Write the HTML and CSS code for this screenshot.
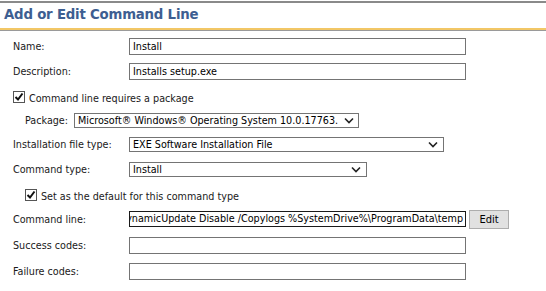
FILE: index.html
```html
<!DOCTYPE html>
<html lang="en">
<head>
    <meta charset="UTF-8">
    <meta name="viewport" content="width=device-width, initial-scale=1.0">
    <title>Add or Edit Command Line</title>
    <link rel="stylesheet" href="styles.css">
</head>
<body>
    <div id="header">
        <h2>Add or Edit Command Line</h2>
    </div>

    <div id="form">
        <div class="row">
            <span class="label">Name:</span>
            <div class="field wide">Install</div>
        </div>
        <div class="row">
            <span class="label">Description:</span>
            <div class="field wide">Installs setup.exe</div>
        </div>
        <div class="row check">
            <span class="box">
                <svg width="10" height="10" viewBox="0 0 10 10"><path d="M1.5 5 L4 7.5 L8.5 1.5" fill="none" stroke="#111" stroke-width="2"/></svg>
            </span>
            <span>Command line requires a package</span>
        </div>
        <div class="row package">
            <span class="sublabel">Package:</span>
            <div class="select pkg">
                <span class="text">Microsoft® Windows® Operating System 10.0.17763.</span>
                <svg width="10" height="7" viewBox="0 0 10 7"><path d="M1 1.5 L5 5.5 L9 1.5" fill="none" stroke="#222" stroke-width="1.6"/></svg>
            </div>
        </div>
        <div class="row">
            <span class="label">Installation file type:</span>
            <div class="select filetype">
                <span class="text">EXE Software Installation File</span>
                <svg width="10" height="7" viewBox="0 0 10 7"><path d="M1 1.5 L5 5.5 L9 1.5" fill="none" stroke="#222" stroke-width="1.6"/></svg>
            </div>
        </div>
        <div class="row">
            <span class="label">Command type:</span>
            <div class="select cmdtype">
                <span class="text">Install</span>
                <svg width="10" height="7" viewBox="0 0 10 7"><path d="M1 1.5 L5 5.5 L9 1.5" fill="none" stroke="#222" stroke-width="1.6"/></svg>
            </div>
        </div>
        <div class="row check indent short">
            <span class="box">
                <svg width="10" height="10" viewBox="0 0 10 10"><path d="M1.5 5 L4 7.5 L8.5 1.5" fill="none" stroke="#111" stroke-width="2"/></svg>
            </span>
            <span>Set as the default for this command type</span>
        </div>
        <div class="row tall">
            <span class="label">Command line:</span>
            <div class="field wide active"><span class="scroll">/DynamicUpdate Disable /Copylogs %SystemDrive%\ProgramData\temp</span></div>
            <button class="btn">Edit</button>
        </div>
        <div class="row tall">
            <span class="label">Success codes:</span>
            <div class="field wide"></div>
        </div>
        <div class="row tall">
            <span class="label">Failure codes:</span>
            <div class="field wide"></div>
        </div>
    </div>
</body>
</html>
```

FILE: styles.css
```css
body {
    margin: 0;
    background-color: #fff;
    font-family: "DejaVu Sans Condensed", "DejaVu Sans", sans-serif;
    font-size: 10.7px;
    color: #1a1a1a;
}

#header {
    border-top: 2px solid #8a8a8a;
    margin-top: 1px;
    border-bottom: 2px solid #f2c766;
    height: 25px;
    box-shadow: 0 1px 0 #9a9a9a;
}

#header h2 {
    margin: 0;
    padding: 4px 0 0 4px;
    font-family: "DejaVu Sans", sans-serif;
    font-size: 13.3px;
    font-weight: bold;
    color: #3d5e91;
    letter-spacing: -0.2px;
}

#form {
    padding: 4px 0 0 13px;
}

.row {
    display: flex;
    align-items: center;
    height: 25px;
}

.row.package {
    height: 23px;
}

.row.short {
    height: 24px;
}

.row.tall {
    height: 26px;
}

.label {
    width: 116px;
    flex-shrink: 0;
}

.sublabel {
    margin-left: 12px;
    width: 49px;
}

.field {
    box-sizing: border-box;
    height: 17px;
    border: 1px solid #747474;
    padding: 0 3px;
    line-height: 15px;
    color: #000;
    white-space: nowrap;
    overflow: hidden;
}

.field.wide {
    width: 337px;
}

.field.active {
    border-color: #1a1a1a;
    height: 16px;
    line-height: 14px;
    display: flex;
    justify-content: flex-end;
    padding: 0 2px;
}

.scroll {
    flex-shrink: 0;
}

.select {
    box-sizing: border-box;
    display: flex;
    align-items: center;
    justify-content: space-between;
    height: 15px;
    border: 1px solid #747474;
    padding: 0 4px 0 3px;
    color: #000;
    white-space: nowrap;
}

.select .text {
    overflow: hidden;
}

.select svg {
    flex-shrink: 0;
    margin-left: 4px;
}

.select.pkg {
    width: 285px;
}

.select.filetype {
    width: 315px;
    padding-right: 5px;
}

.select.cmdtype {
    width: 238px;
    padding-right: 5px;
}

.check {
    padding-top: 4px;
    box-sizing: border-box;
}

.check.indent {
    padding-left: 12px;
}

.box {
    box-sizing: border-box;
    width: 12px;
    height: 12px;
    border: 1px solid #555;
    margin-right: 4px;
    margin-top: -3px;
    display: flex;
    align-items: center;
    justify-content: center;
}

.btn {
    margin-left: 3px;
    width: 40px;
    height: 19px;
    padding: 0;
    border: 1px solid #adadad;
    background-color: #e1e1e1;
    font-family: "DejaVu Sans Condensed", "DejaVu Sans", sans-serif;
    font-size: 11px;
    color: #000;
}
```
